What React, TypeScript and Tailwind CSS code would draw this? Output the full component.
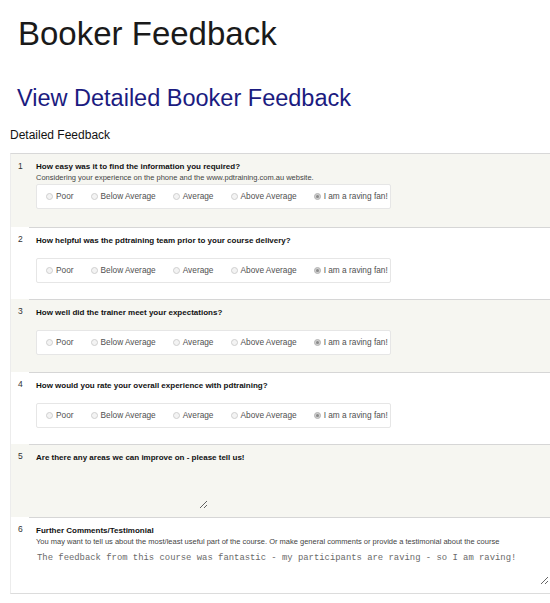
import React from "react";

const OPTIONS = ["Poor", "Below Average", "Average", "Above Average", "I am a raving fan!"];

function Radio({ selected }: { selected?: boolean }) {
  return selected ? (
    <span className="mr-[3px] flex h-[7px] w-[7px] items-center justify-center rounded-full border border-[#b4b4b4] bg-[#d0d0d0]">
      <span className="h-[3px] w-[3px] rounded-full bg-[#8a8a8a]" />
    </span>
  ) : (
    <span className="mr-[3px] h-[7px] w-[7px] rounded-full border border-[#cfcfcf] bg-[#f3f3f3]" />
  );
}

function RadioBox() {
  return (
    <div className="flex h-[25px] w-[355px] items-center rounded-[2px] border border-[#e6e6e6] bg-white pl-[9px] text-[8.3px] text-[#505050]">
      {OPTIONS.map((o, i) => (
        <label key={o} className={`flex items-center ${i < 4 ? "mr-[17px]" : ""}`}>
          <Radio selected={i === 4} />
          {o}
        </label>
      ))}
    </div>
  );
}

type Row = {
  n: number;
  q: string;
  sub?: string;
  kind: "radio" | "text" | "comment";
  h: string;
  bg: string;
};

const ROWS: Row[] = [
  {
    n: 1,
    q: "How easy was it to find the information you required?",
    sub: "Considering your experience on the phone and the www.pdtraining.com.au website.",
    kind: "radio",
    h: "h-[73px]",
    bg: "bg-[#f6f6f1]",
  },
  { n: 2, q: "How helpful was the pdtraining team prior to your course delivery?", kind: "radio", h: "h-[72px]", bg: "bg-white" },
  { n: 3, q: "How well did the trainer meet your expectations?", kind: "radio", h: "h-[73px]", bg: "bg-[#f6f6f1]" },
  { n: 4, q: "How would you rate your overall experience with pdtraining?", kind: "radio", h: "h-[72px]", bg: "bg-white" },
  { n: 5, q: "Are there any areas we can improve on - please tell us!", kind: "text", h: "h-[73px]", bg: "bg-[#f6f6f1]" },
  {
    n: 6,
    q: "Further Comments/Testimonial",
    sub: "You may want to tell us about the most/least useful part of the course. Or make general comments or provide a testimonial about the course",
    kind: "comment",
    h: "h-[76px]",
    bg: "bg-white",
  },
];

export default function App() {
  return (
    <div className="h-[603px] w-[550px] overflow-hidden bg-white font-['Liberation_Sans',Arial,sans-serif]">
      <h1 className="ml-[18px] mt-[15px] text-[33px] font-normal leading-[38px] text-[#1a1a1a]">Booker Feedback</h1>
      <a href="#" className="ml-[17px] mt-[31px] block text-[23.5px] leading-[28px] text-[#1b1b80]">
        View Detailed Booker Feedback
      </a>
      <div className="ml-[10px] mt-[16px] text-[12px] leading-[14px] text-[#111]">Detailed Feedback</div>
      <div className="ml-[10px] mt-[11px] w-[540px] border-l border-t border-b border-l-[#ececec] border-t-[#d8d8d8] border-b-[#dcdcdc]">
        {ROWS.map((r, idx) => (
          <div key={r.n} className={`flex ${r.h} ${r.bg}`}>
            <div className="w-[18px] shrink-0 pl-[7px] pt-[7px] text-[8.5px] leading-[11px] text-[#333]">{r.n}</div>
            <div className={`flex-1 pl-[7px] pt-[7px] ${idx > 0 ? "border-t border-[#d6d6d6]" : ""}`}>
              <div className="text-[8px] font-bold leading-[11px] text-[#111]">{r.q}</div>
              {r.kind !== "text" && (
                <div className="h-[11px] text-[7.5px] leading-[11px] text-[#444]">{r.sub ?? ""}</div>
              )}
              {r.kind === "radio" && (
                <div className="mt-[1px]">
                  <RadioBox />
                </div>
              )}
              {r.kind === "text" && (
                <textarea className="mt-[2px] block h-[44px] w-[172px] resize border-0 bg-transparent outline-none" />
              )}
              {r.kind === "comment" && (
                <textarea
                  className="mt-[1px] block h-[37px] w-[513px] resize border-0 bg-transparent px-[1px] pt-[4px] font-['Liberation_Mono',monospace] text-[8.9px] leading-[12px] text-[#6a6a6a] outline-none"
                  defaultValue="The feedback from this course was fantastic - my participants are raving - so I am raving!"
                />
              )}
            </div>
          </div>
        ))}
      </div>
    </div>
  );
}
